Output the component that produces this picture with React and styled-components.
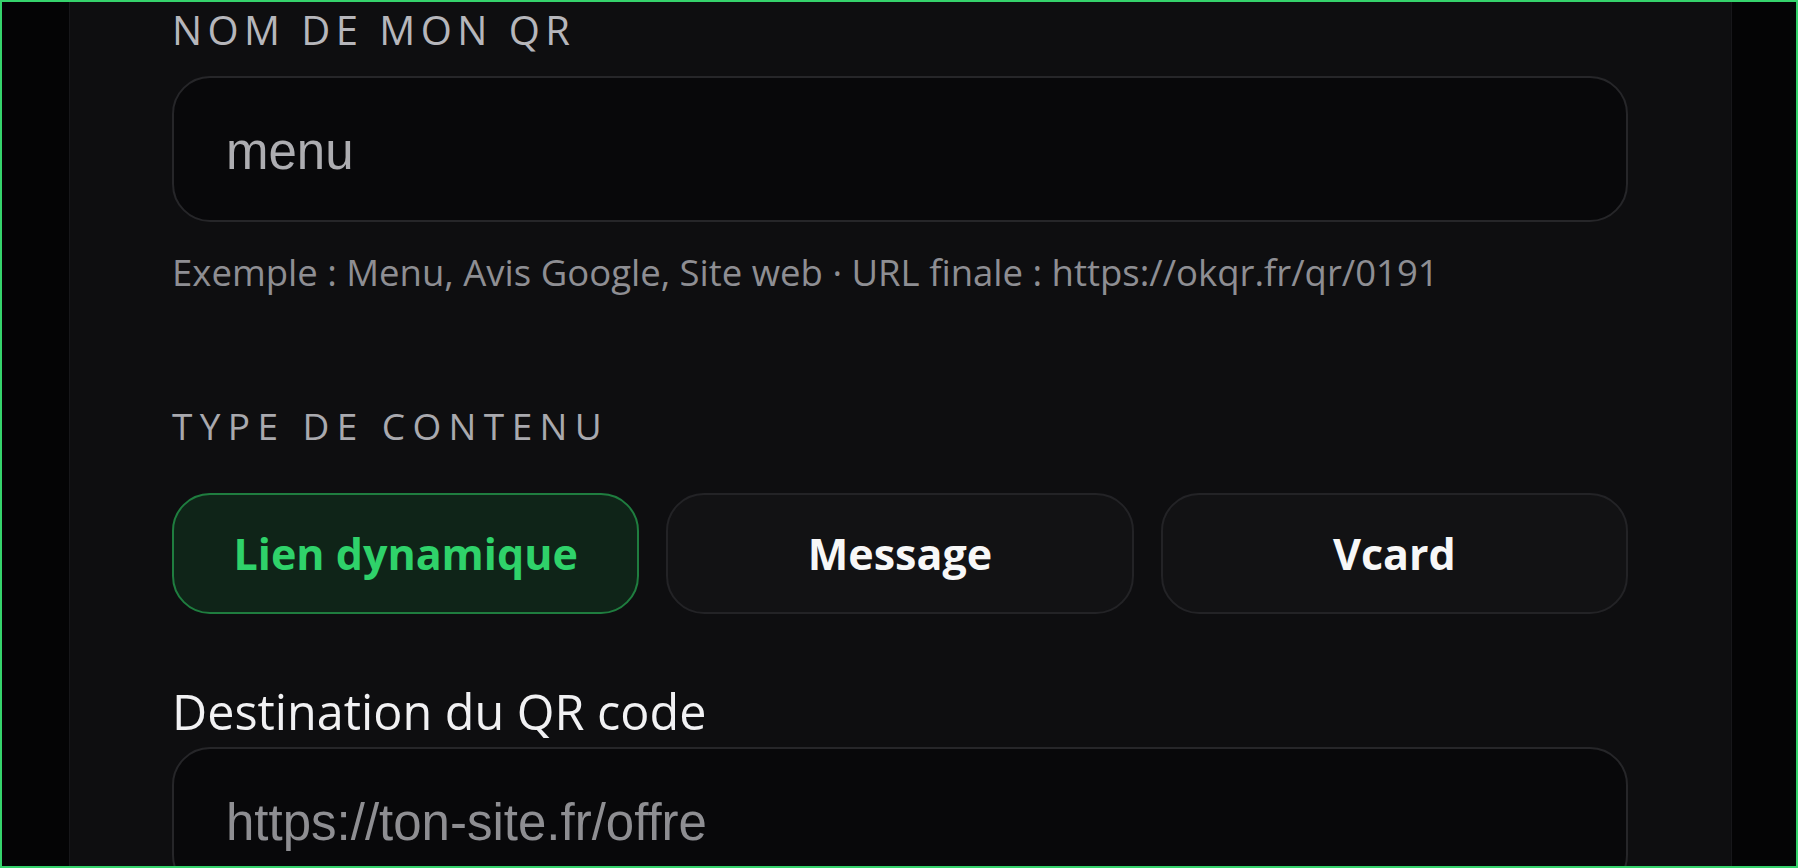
import React from "react";
import styled, { createGlobalStyle } from "styled-components";

const GlobalStyle = createGlobalStyle`
  html, body {
    margin: 0;
    padding: 0;
    background: #040405;
    overflow: hidden;
  }
  * { box-sizing: border-box; }
`;

const Frame = styled.div`
  height: 100vh;
  border: 2px solid #35d36c;
  background: #040405;
  display: flex;
  padding: 0 64px 0 67px;
  overflow: hidden;
`;

const Panel = styled.main`
  flex: 1;
  background: #0e0e10;
  border-left: 1px solid #17171a;
  border-right: 1px solid #17171a;
  padding: 8px 103px 0 102px;
  display: flex;
  flex-direction: column;
  font-family: "Open Sans", "Noto Sans", sans-serif;
`;

const Section = styled.section`
  display: flex;
  flex-direction: column;
  margin-top: ${(p) => p.$top || 0}px;
`;

const Eyebrow = styled.div`
  font-size: ${(p) => p.$size}px;
  line-height: ${(p) => p.$lh}px;
  letter-spacing: ${(p) => p.$spacing}em;
  text-transform: uppercase;
  color: ${(p) => p.$color || "#b3b3b8"};
  font-weight: 400;
`;

const TextInput = styled.input`
  display: block;
  width: 100%;
  height: 146px;
  margin-top: ${(p) => p.$top}px;
  padding: 5px 40px 0 52px;
  border: 2px solid #262629;
  border-radius: 38px;
  background: #08080a;
  color: #adadb1;
  font-family: "Liberation Sans", Arial, sans-serif;
  font-size: 51px;
  outline: none;
  &::placeholder {
    color: #8e8e92;
    opacity: 1;
  }
`;

const Help = styled.p`
  margin: 32px 0 0;
  font-size: 36.5px;
  line-height: 36px;
  color: #8e8e93;
  white-space: nowrap;
`;

const ChoiceRow = styled.div`
  display: grid;
  grid-template-columns: repeat(3, 1fr);
  gap: 27px;
  margin-top: 49px;
`;

const Choice = styled.button`
  height: 121px;
  border-radius: 38px;
  border: 2px solid ${(p) => (p.$active ? "#1f7d3f" : "#232326")};
  background: ${(p) => (p.$active ? "#0f2418" : "#121214")};
  color: ${(p) => (p.$active ? "#2fd26a" : "#f7f7f7")};
  font-family: "Open Sans", "Noto Sans", sans-serif;
  font-weight: 700;
  font-size: 43px;
  cursor: pointer;
  padding: 0;
`;

const FieldLabel = styled.label`
  font-size: 48.5px;
  line-height: 47px;
  color: #f1f1f3;
`;

export default function App() {
  return (
    <>
      <GlobalStyle />
      <Frame>
        <Panel>
          <Section>
            <Eyebrow $size={40} $lh={39} $spacing={0.136} $color="#b6b6bb">Nom de mon QR</Eyebrow>
            <TextInput $top={27} defaultValue="menu" />
            <Help>Exemple : Menu, Avis Google, Site web · URL finale : https://okqr.fr/qr/0191</Help>
          </Section>
          <Section $top={117}>
            <Eyebrow $size={37} $lh={37} $spacing={0.2} $color="#a9a9ae">Type de contenu</Eyebrow>
            <ChoiceRow>
              <Choice $active>Lien dynamique</Choice>
              <Choice>Message</Choice>
              <Choice>Vcard</Choice>
            </ChoiceRow>
          </Section>
          <Section $top={74}>
            <FieldLabel htmlFor="dest">Destination du QR code</FieldLabel>
            <TextInput id="dest" $top={12} placeholder="https://ton-site.fr/offre" />
          </Section>
        </Panel>
      </Frame>
    </>
  );
}
